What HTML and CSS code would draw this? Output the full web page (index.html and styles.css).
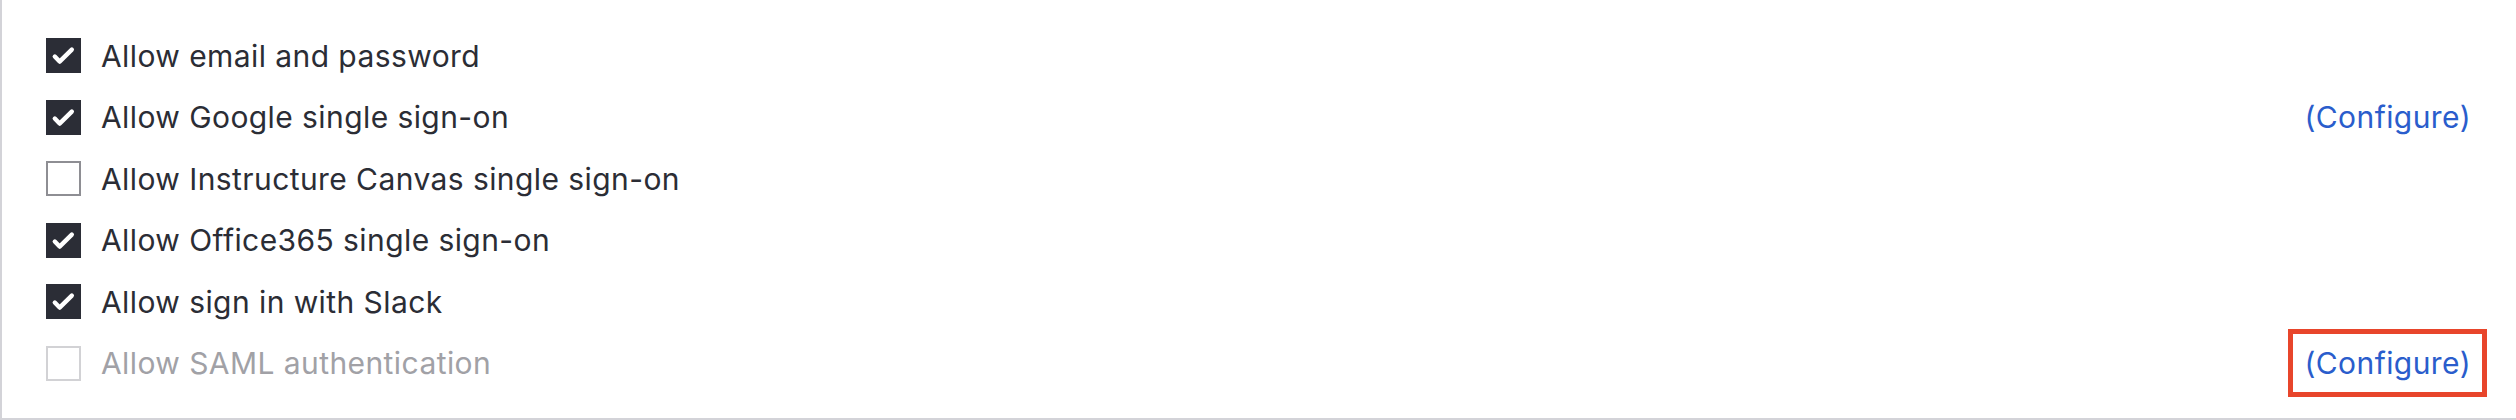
FILE: index.html
```html
<!DOCTYPE html>
<html>
<head>
<meta charset="utf-8">
<link rel="stylesheet" href="styles.css">
</head>
<body>
<div class="panel">
  <div class="row">
    <span class="box checked"><svg viewBox="0 0 35 35"><path d="M8.8 18.6 L13.6 23.6 L25.8 11.6"/></svg></span>
    <span class="label">Allow email and password</span>
  </div>
  <div class="row">
    <span class="box checked"><svg viewBox="0 0 35 35"><path d="M8.8 18.6 L13.6 23.6 L25.8 11.6"/></svg></span>
    <span class="label">Allow Google single sign-on</span>
    <a class="configure">(Configure)</a>
  </div>
  <div class="row">
    <span class="box"></span>
    <span class="label">Allow Instructure Canvas single sign-on</span>
  </div>
  <div class="row">
    <span class="box checked"><svg viewBox="0 0 35 35"><path d="M8.8 18.6 L13.6 23.6 L25.8 11.6"/></svg></span>
    <span class="label">Allow Office365 single sign-on</span>
  </div>
  <div class="row">
    <span class="box checked"><svg viewBox="0 0 35 35"><path d="M8.8 18.6 L13.6 23.6 L25.8 11.6"/></svg></span>
    <span class="label">Allow sign in with Slack</span>
  </div>
  <div class="row disabled">
    <span class="box"></span>
    <span class="label">Allow SAML authentication</span>
    <a class="configure highlighted">(Configure)</a>
  </div>
</div>
</body>
</html>
```
FILE: styles.css
```css
html, body {
  margin: 0;
  padding: 0;
  background: #ffffff;
}
.panel {
  box-sizing: border-box;
  height: 420px;
  border-left: 2px solid #d3d3d8;
  border-bottom: 2px solid #d3d3d8;
  padding: 25px 45px 24px 44px;
  font-family: Inter, "Noto Sans", sans-serif;
  font-size: 30px;
  letter-spacing: 0.42px;
  color: #2b2d35;
}
.row {
  display: flex;
  align-items: center;
  height: 61.5px;
}
.box {
  box-sizing: border-box;
  width: 35px;
  height: 35px;
  flex: none;
  border: 2px solid #8e8e93;
  background: #fff;
  margin-right: 20px;
  position: relative;
}
.box.checked {
  background: #2b2d36;
  border-color: #2b2d36;
}
.box svg {
  position: absolute;
  left: -2px;
  top: -2px;
  width: 35px;
  height: 35px;
  fill: none;
  stroke: #ffffff;
  stroke-width: 4.4;
  stroke-linecap: round;
  stroke-linejoin: round;
}
.label {
  flex: 1;
}
.disabled .box {
  border-color: #d2d2d5;
}
.disabled .label {
  color: #a1a1a6;
}
.configure {
  color: #2a5dcc;
  cursor: pointer;
}
.configure.highlighted {
  outline: 5px solid #e8452b;
  outline-offset: 11px;
}
```
